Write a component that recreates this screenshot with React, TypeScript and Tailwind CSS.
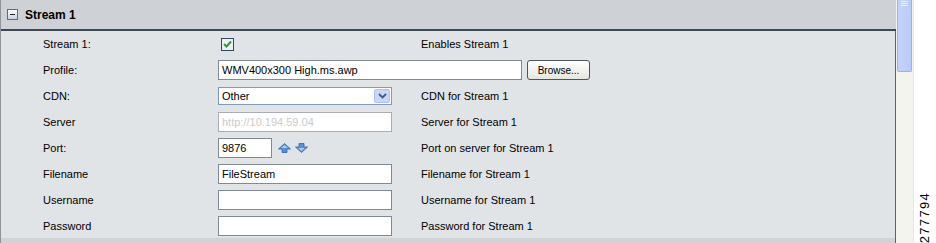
import { ReactNode } from "react";

const font = "font-['Liberation_Sans',Arial,sans-serif]";

const Field = ({ w, value, muted }: { w: string; value?: string; muted?: boolean }) => (
  <div
    className={`${w} shrink-0 h-[20px] bg-white border flex items-center pl-[3px] text-[11px] ${
      muted ? "border-[#a9aeb5] text-[#c9cbce]" : "border-[#7f8a96] text-black"
    }`}
  >
    {value}
  </div>
);

const Arrow = ({ down }: { down?: boolean }) => (
  <svg width="13" height="10" viewBox="0 0 13 10" className={down ? "rotate-180" : ""}>
    <path d="M6.5 0.5 L12.5 6 L9 6 L9 9.5 L4 9.5 L4 6 L0.5 6 Z" fill="#5b8fd8" stroke="#2f62b5" strokeWidth="0.8" />
    <path d="M6.5 2 L10 5 L3 5 Z" fill="#a9c8f4" />
  </svg>
);

const rows: { label: string; control: ReactNode; desc?: string }[] = [
  {
    label: "Stream 1:",
    control: (
      <div className="ml-[3px] w-[13px] h-[13px] border border-[#2a4a6a] bg-[#eef0ee] flex items-center justify-center">
        <svg width="9" height="8" viewBox="0 0 9 8">
          <path d="M1 4 L3.5 6.5 L8 1.5" fill="none" stroke="#2f9a35" strokeWidth="2" />
        </svg>
      </div>
    ),
    desc: "Enables Stream 1",
  },
  {
    label: "Profile:",
    control: (
      <div className="flex items-center gap-[5px]">
        <Field w="w-[304px]" value="WMV400x300 High.ms.awp" />
        <button className="w-[63px] shrink-0 h-[20px] rounded-[3px] border border-[#4a5560] bg-gradient-to-b from-white to-[#e6e6e0] text-[10px] text-black">
          Browse...
        </button>
      </div>
    ),
  },
  {
    label: "CDN:",
    control: (
      <div className="w-[174px] h-[18px] bg-white border border-[#7f9db9] flex items-center justify-between">
        <span className="pl-[3px] text-[11px] text-black">Other</span>
        <div className="w-[16px] h-[14px] mr-px rounded-[2px] bg-[#c9d6f5] border border-[#b0c2ee] flex items-center justify-center">
          <svg width="9" height="6" viewBox="0 0 9 6">
            <path d="M1 1 L4.5 4.5 L8 1" fill="none" stroke="#3b5a94" strokeWidth="1.8" />
          </svg>
        </div>
      </div>
    ),
    desc: "CDN for Stream 1",
  },
  { label: "Server", control: <Field w="w-[174px]" value="http://10.194.59.04" muted />, desc: "Server for Stream 1" },
  {
    label: "Port:",
    control: (
      <div className="flex items-center">
        <Field w="w-[54px]" value="9876" />
        <div className="flex items-center gap-[4px] ml-[6px]">
          <Arrow />
          <Arrow down />
        </div>
      </div>
    ),
    desc: "Port on server for Stream 1",
  },
  { label: "Filename", control: <Field w="w-[174px]" value="FileStream" />, desc: "Filename for Stream 1" },
  { label: "Username", control: <Field w="w-[174px]" />, desc: "Username for Stream 1" },
  { label: "Password", control: <Field w="w-[174px]" />, desc: "Password for Stream 1" },
];

export default function App() {
  return (
    <div className={`w-[936px] h-[243px] flex bg-white overflow-hidden ${font}`}>
      {/* main panel */}
      <div className="w-[896px] h-full flex flex-col border-l border-[#8e949b]">
        <div className="h-[31px] shrink-0 bg-[#ced1d6] border-b-2 border-[#3c4952] flex items-center pl-[6px] gap-[7px]">
          <div className="w-[11px] h-[11px] border border-[#5d6c82] bg-gradient-to-b from-white to-[#c9d3e4] flex items-center justify-center">
            <div className="w-[5px] h-px bg-[#1d2a3c]" />
          </div>
          <span className="text-[12px] font-bold text-black">Stream 1</span>
        </div>
        <div className="flex-1 flex flex-col bg-[#e1e4e7] border-r border-[#5c6268] overflow-hidden">
          <div className="flex-1 overflow-hidden">
            {rows.map((r) => (
              <div key={r.label} className="h-[26px] flex items-center text-[11px] text-black">
                <div className="w-[217px] pl-[42px] shrink-0">{r.label}</div>
                <div className="w-[203px] shrink-0">{r.control}</div>
                {r.desc && <div>{r.desc}</div>}
              </div>
            ))}
          </div>
          <div className="h-[5px] shrink-0 bg-[#cfd2d7]" />
        </div>
      </div>

      {/* scrollbar */}
      <div className="w-[18px] h-full bg-[#f4f4ee] border-r border-[#e8e8e2] flex flex-col pl-px">
        <div className="w-[15px] h-[72px] bg-gradient-to-r from-[#c4d3fb] to-[#b9cbfa] border border-[#9fb2dc] border-t-0 rounded-b-[2px] flex flex-col items-center gap-px pt-px">
          <div className="w-[7px] h-px bg-[#eef2fe]" />
          <div className="w-[7px] h-px bg-[#eef2fe]" />
          <div className="w-[7px] h-px bg-[#eef2fe]" />
        </div>
      </div>

      {/* figure number */}
      <div className="flex-1 h-full flex flex-col justify-end items-center pb-0 pr-[2px]">
        <span className="[writing-mode:vertical-rl] rotate-180 text-[13px] leading-none tracking-[1.3px] text-black font-['Liberation_Sans_Narrow','Liberation_Sans',sans-serif]">
          277794
        </span>
      </div>
    </div>
  );
}
